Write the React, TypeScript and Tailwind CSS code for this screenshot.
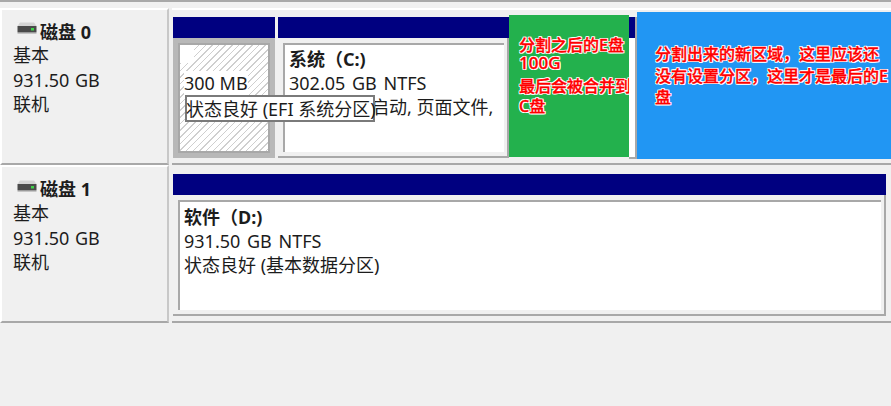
const fontStack = "font-['Noto_Sans','Noto_Sans_CJK_SC',sans-serif]";
const halo =
  "[-webkit-text-stroke:0.35px_#ff0000] [text-shadow:1px_0_0_#fff,-1px_0_0_#fff,0_1px_0_#fff,0_-1px_0_#fff,1px_1px_0_#fff,-1px_-1px_0_#fff,1px_-1px_0_#fff,-1px_1px_0_#fff]";

const DiskIcon = () => (
  <svg width="20" height="12" viewBox="0 0 20 12" className="shrink-0">
    <path d="M3 0.5 H17 L19.5 4 H0.5 Z" fill="#d4d4d4" />
    <rect x="0.5" y="4" width="19" height="6" fill="#4a4a4a" />
    <rect x="0.5" y="10" width="19" height="1.5" fill="#9a9a9a" />
    <rect x="14" y="6" width="3" height="2.5" fill="#3fd24a" />
  </svg>
);

const DiskLabel = ({ name, first }: { name: string; first?: boolean }) => (
  <div
    className={`w-[169px] shrink-0 border-t-2 border-l-2 border-t-white border-l-white border-b-2 border-r-2 border-b-[#a8a8a8] border-r-[#c8c8c8] pl-[11px] text-[18px] leading-[24.5px] ${
      first ? "pt-[9px]" : "pt-[10px]"
    }`}
  >
    <div className="flex items-start h-[24px] font-bold">
      <div className="ml-[4px] mt-[3px] mr-[3px]">
        <DiskIcon />
      </div>
      <span className={`text-[18px] ${first ? "mt-[1px]" : "mt-0"}`}>{name}</span>
    </div>
    <div>基本</div>
    <div className="[word-spacing:1px]">931.50 GB</div>
    <div>联机</div>
  </div>
);

const Partition = ({
  className,
  children,
}: {
  className: string;
  children?: React.ReactNode;
}) => (
  <div className={`flex flex-col shrink-0 ${className}`}>
    <div className="h-[21px] bg-[#000080] shrink-0" />
    <div className="flex-1 min-h-0 bg-[#f0f0f0] border-r-2 border-b-2 border-[#a8a8a8] pt-[5px] pl-[5px] pr-[3px] pb-[4px]">
      <div className="h-full bg-white border-t-2 border-l-2 border-[#a8a8a8] pl-[4px] pt-[3px] leading-[24px] text-[18px] overflow-hidden whitespace-nowrap">
        {children}
      </div>
    </div>
  </div>
);

export default function App() {
  return (
    <div className={`w-[891px] h-[406px] overflow-hidden bg-[#f0f0f0] text-[#1c1c1c] ${fontStack}`}>
      <div className="h-[8px] border-t-2 border-[#a8a8a8]" />

      {/* disk 0 */}
      <div className="flex h-[157px]">
        <DiskLabel name="磁盘 0" first />
        <div className="relative flex-1 ml-[3px] pl-px border-t-2 border-t-white border-b-2 border-b-[#a8a8a8] flex pt-[7px] pb-[5px]">
          {/* EFI: selected partition */}
          <div className="w-[102px] shrink-0 flex flex-col">
            <div className="h-[21px] bg-[#000080] shrink-0" />
            <div className="flex-1 bg-[#b8b8b8] p-[5px]">
              <div className="h-full border-2 border-[#a8a8a8] bg-[repeating-linear-gradient(135deg,#fff_0,#fff_3.6px,#cfcfcf_3.6px,#cfcfcf_4.7px)] pl-[4px] text-[18px] leading-[24px]">
                <div className="-ml-[4px] h-[18px] w-[14px] bg-white" />
                <div className="mt-[8px] inline-block bg-white">300 MB</div>
              </div>
            </div>
          </div>
          <div className="w-[3px] shrink-0" />
          <Partition className="w-[231px]">
            <div className="-mt-px font-bold">系统（C:)</div>
            <div className="[word-spacing:2px]">302.05 GB NTFS</div>
            <div>状态良好 (启动, 页面文件,</div>
          </Partition>

          {/* green note painted over the volume */}
          <div className="w-[120px] shrink-0 -mt-[2px] mb-[1px] bg-[#23b14d] pl-[10px] pt-[20px] text-[16px] leading-[20px] text-[#ff0000] font-medium">
            <div className={halo}>分割之后的E盘</div>
            <div className={`${halo} text-[17px] leading-[16px]`}>100G</div>
            <div className={`${halo} mt-[5px] whitespace-nowrap`}>最后会被合并到</div>
            <div className={halo}>C盘</div>
          </div>

          {/* what is left of the system volume next to the note */}
          <div className="w-[8px] shrink-0 flex flex-col border-r-2 border-b-2 border-[#a8a8a8] -mb-px">
            <div className="h-[21px] bg-[#000080] shrink-0" />
            <div className="flex-1 bg-white" />
          </div>

          {/* blue note */}
          <div className="flex-1 -mt-[5px] -mb-[1px] bg-[#2196f3] pl-[18px] pt-[32px] pr-0 text-[16px] leading-[21.5px] text-[#ff0000] font-medium">
            <p className={halo}>
              分割出来的新区域，这里应该还
              <br />
              没有设置分区，这里才是最后的E
              <br />盘
            </p>
          </div>

          <div className="absolute left-[13px] top-[85px] h-[27px] w-[190px] border-2 border-[#7a7a7a] bg-white text-[18px] leading-[24px] whitespace-nowrap">
            <span className="inline-block -ml-px">状态良好 (EFI 系统分区)</span>
          </div>
        </div>
      </div>

      {/* disk 1 */}
      <div className="flex h-[158px]">
        <DiskLabel name="磁盘 1" />
        <div className="flex-1 ml-[3px] pl-px border-b-2 border-b-[#a8a8a8] pt-[9px] pb-[5px] pr-[5px]">
          <Partition className="h-full">
            <div className="font-bold">软件（D:)</div>
            <div className="[word-spacing:2px]">931.50 GB NTFS</div>
            <div>状态良好 (基本数据分区)</div>
          </Partition>
        </div>
      </div>
    </div>
  );
}
